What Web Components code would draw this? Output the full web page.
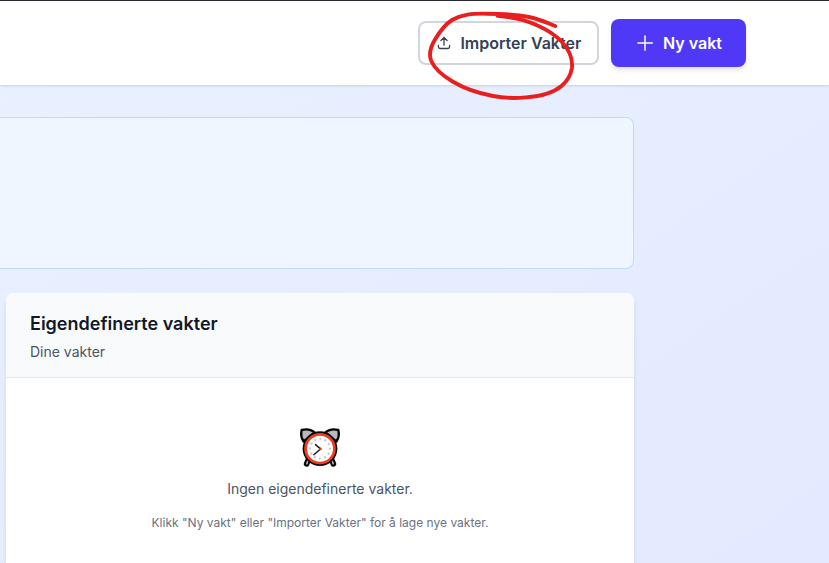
<!DOCTYPE html>
<html lang="no">
<head>
<meta charset="utf-8">
<title>Vakter</title>
<style>
body{margin:0;width:829px;height:563px;overflow:hidden;position:relative;font-family:Inter,"Liberation Sans",sans-serif;background:linear-gradient(145deg,#e9f1ff 0%,#e6edff 55%,#e3e9ff 100%)}
</style>
</head>
<body>
<vakt-page></vakt-page>
<script>
const define=(name,html)=>customElements.define(name,class extends HTMLElement{
  constructor(){super();this.attachShadow({mode:'open'}).innerHTML=html;}
});

define('app-button',`<style>
:host{display:flex;align-items:center;box-sizing:border-box;border-radius:8px;font-size:16px;line-height:24px;font-weight:600;white-space:nowrap}
:host([kind=outline]){width:181px;height:44px;border:2px solid #d1d5dc;background:#fff;color:#364153;padding-left:16px;gap:8.4px}
:host([kind=primary]){width:135px;height:48px;background:#4f39f6;color:#fff;padding-left:24px;gap:8px;box-shadow:0 4px 6px -1px #0000001a,0 2px 4px -2px #0000001a}
</style><slot name="icon"></slot><slot></slot>`);

define('upload-icon',`<style>:host{display:block;width:16px;height:16px}svg{display:block}</style>
<svg width="16" height="16" viewBox="0 0 16 16" fill="none" stroke="currentColor" stroke-width="1.3" stroke-linecap="round" stroke-linejoin="round"><path d="M8 10.2V2.7M4.9 5.5L8 2.5l3.1 3M2.4 10.3v1.5c0 1 .6 1.7 1.7 1.7h7.8c1.1 0 1.7-.7 1.7-1.7v-1.5"/></svg>`);

define('plus-icon',`<style>:host{display:block;width:20px;height:20px}svg{display:block}</style>
<svg width="20" height="20" viewBox="0 0 20 20" fill="none" stroke="currentColor" stroke-width="1.5" stroke-linecap="round"><path d="M10 2.9v14.4M2.9 10h14.4"/></svg>`);

define('app-header',`<style>
:host{display:flex;box-sizing:border-box;height:85px;border-top:1px solid #2b2a33;background:#fff;padding-right:83px;justify-content:flex-end;align-items:center;gap:12px;box-shadow:0 1px 3px #0000001a,0 1px 2px -1px #0000001a}
</style><slot></slot>`);

define('info-panel',`<style>
:host{display:block;box-sizing:border-box;height:152px;width:634px;border:1px solid #bedbff;border-left:0;border-radius:0 8px 8px 0;background:#eff6ff}
</style>`);

define('shift-card',`<style>
:host{display:flex;flex-direction:column;box-sizing:border-box;width:628px;height:270px;margin-left:6px;border-radius:8px 8px 0 0;background:#fff;overflow:hidden;box-shadow:0 4px 6px -1px #0000001a,0 2px 4px -2px #0000001a}
header{box-sizing:border-box;height:85px;padding:17px 24px 15px;background:#f9fafb;border-bottom:1px solid #e5e7eb}
h2{margin:0;font-size:18px;line-height:28px;font-weight:600;color:#101828}
p{margin:4px 0 0;font-size:14px;line-height:20px;color:#4a5565}
</style><header><h2><slot name="title"></slot></h2><p><slot name="subtitle"></slot></p></header><slot></slot>`);

define('empty-state',`<style>
:host{display:flex;flex-direction:column;align-items:center;padding-top:48px}
.main{margin-top:9px;font-size:14px;line-height:20px;color:#4a5565}
.hint{margin-top:16px;font-size:12px;line-height:16px;color:#6a7282}
</style><slot name="icon"></slot><div class="main"><slot name="main"></slot></div><div class="hint"><slot name="hint"></slot></div>`);

define('alarm-clock',`<style>:host{display:block;width:44px;height:44px}svg{display:block}</style>
<svg width="44" height="44" viewBox="298 426 44 44">
<g stroke="#050505" stroke-width="2.4" stroke-linecap="round" stroke-linejoin="round">
<path d="M308.8 458.5l-2.2 5.4M331.2 458.5l2.2 5.4" stroke-width="5.6"/>
<path d="M308.8 458.5l-2 5.2M331.2 458.5l2 5.2" stroke="#b9b9b9" stroke-width="1.6"/>
<path fill="#b7b9bb" d="M303.6 441.5c-2.5-3.4-2.9-7.6-1.9-11.5 4.6-1.1 9.6-.6 13.1 2.6zM336.4 441.5c2.5-3.4 2.9-7.6 1.9-11.5-4.6-1.1-9.6-.6-13.1 2.6z"/>
</g>
<circle cx="320" cy="448.7" r="17.4" fill="#050505"/>
<circle cx="320" cy="448.7" r="14.4" fill="#fff" stroke="#ee3d20" stroke-width="2.8"/>
<circle cx="320" cy="448.7" r="9.9" fill="none" stroke="#c6c8ca" stroke-width="2.3" stroke-linecap="round" stroke-dasharray=".05 5.1336"/>
<path d="M315.5 444.6l5 4.3-6.6 5.9" fill="none" stroke="#171717" stroke-width="1.4" stroke-linejoin="round" stroke-linecap="round"/>
<circle cx="320.5" cy="448.9" r="1.3" fill="#e83b22"/>
</svg>`);

define('ink-circle',`<style>:host{position:absolute;left:420px;top:5px;pointer-events:none}svg{display:block}</style>
<svg width="162" height="100" viewBox="420 5 162 100" fill="none" stroke="#e91e1e" stroke-width="3.9" stroke-linecap="round" stroke-linejoin="round"><path d="M555.3 26C545 22 539 19 529 17C517 14.5 505 13.7 487 13.7C472 13.4 462 14.2 452 20C444 25 439.5 32 435 39.5C430.5 47 428.5 55 431.5 61.5C435 69 444 76.5 453 81.8C465 89 481 93.8 493 96C503 98 515 98.4 526 97.4C541 96.4 553 93 561.5 86C568 80.5 570.8 75 571.9 68C573 59 569 49.5 561.5 41.5C555 34.7 546 29.3 538 25.7C527 20.5 513 17 497.5 15.8"/></svg>`);

define('vakt-page',`<style>
:host{display:block}
main{display:flex;flex-direction:column;gap:24px;padding-top:32px}
</style>
<app-header>
<app-button kind="outline"><upload-icon slot="icon"></upload-icon>Importer Vakter</app-button>
<app-button kind="primary"><plus-icon slot="icon"></plus-icon>Ny vakt</app-button>
</app-header>
<main><info-panel></info-panel>
<shift-card><span slot="title">Eigendefinerte vakter</span><span slot="subtitle">Dine vakter</span>
<empty-state><alarm-clock slot="icon"></alarm-clock><span slot="main">Ingen eigendefinerte vakter.</span><span slot="hint">Klikk "Ny vakt" eller "Importer Vakter" for å lage nye vakter.</span></empty-state>
</shift-card></main>
<ink-circle></ink-circle>`);
</script>
</body>
</html>
